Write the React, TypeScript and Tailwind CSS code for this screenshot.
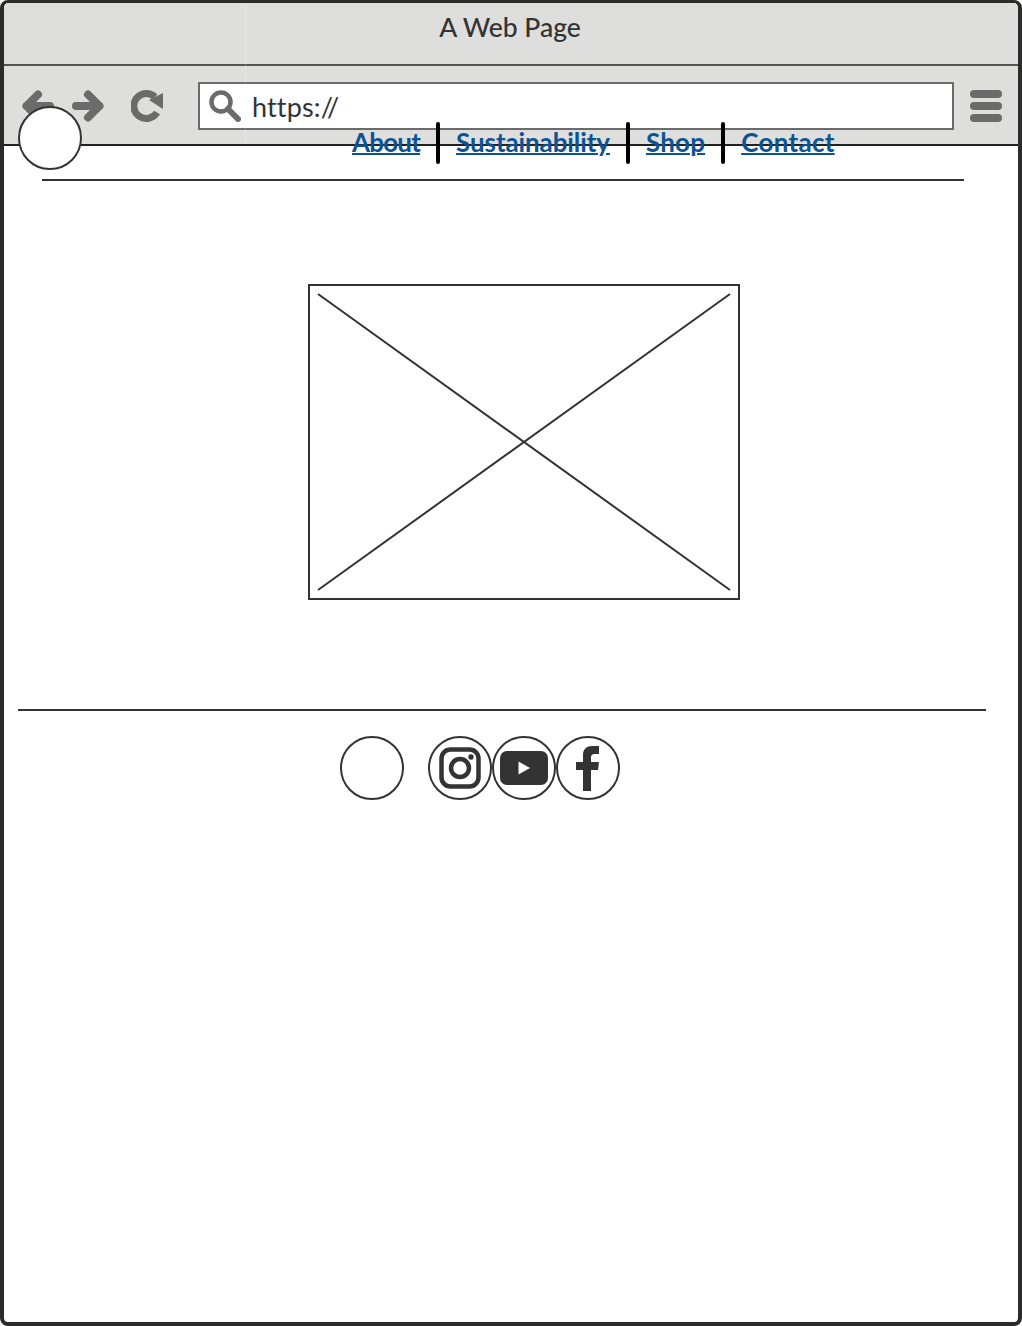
import React from 'react';

const navItems = [
  { label: 'About', tracking: 'tracking-[-0.8px]' },
  { label: 'Sustainability', tracking: 'tracking-[-0.1px]' },
  { label: 'Shop', tracking: 'tracking-[0.2px]' },
  { label: 'Contact', tracking: 'tracking-[0.3px]' },
];

const Social: React.FC<{ children?: React.ReactNode }> = ({ children }) => (
  <div className="w-16 h-16 shrink-0 rounded-full border-2 border-[#333333] bg-white flex items-center justify-center">
    {children}
  </div>
);

const App: React.FC = () => {
  return (
    <div className="relative w-[1022px] h-[1326px] bg-white border-t-[3px] border-x-4 border-b-4 border-[#2b2b2b] rounded-lg overflow-hidden font-['Lato',sans-serif]">
      {/* browser chrome */}
      <div className="h-[63px] bg-[#dededc] border-b-2 border-[#555555] flex items-center justify-center pb-[13px]">
        <span className="text-[26.5px] leading-none font-medium text-[#333333] -ml-[2px]">A Web Page</span>
      </div>
      <div className="h-[80px] bg-[#dededc] border-b-2 border-[#222222] flex items-center pl-[18px] pr-[16px] pt-[2px]">
        <svg width="32" height="32" viewBox="0 0 32 32" className="shrink-0">
          <path d="M28 16H4.500M16 4.500 4.500 16 16 27.500" fill="none" stroke="#6b6b6b" strokeWidth="8" strokeLinecap="round" strokeLinejoin="round" />
        </svg>
        <svg width="32" height="32" viewBox="0 0 32 32" className="shrink-0 ml-[18px]">
          <path d="M4 16h23.500M16 4.500 27.500 16 16 27.500" fill="none" stroke="#6b6b6b" strokeWidth="8" strokeLinecap="round" strokeLinejoin="round" />
        </svg>
        <svg width="32" height="32" viewBox="0 0 32 32" className="shrink-0 ml-[27px]">
          <path d="M26 22.500A12.500 12.500 0 1 1 24 7" fill="none" stroke="#6b6b6b" strokeWidth="7" />
          <path d="M32 3v16L18 10z" fill="#6b6b6b" />
        </svg>
        <div className="ml-[35px] w-[756px] h-[48px] shrink-0 bg-white border-2 border-[#6b6b6b] flex items-center">
          <svg width="32" height="32" viewBox="0 0 32 32" className="shrink-0 ml-[9px]">
            <circle cx="12" cy="12" r="9.500" fill="none" stroke="#6b6b6b" strokeWidth="4.500" />
            <path d="M19 19 29 29" fill="none" stroke="#6b6b6b" strokeWidth="6" strokeLinecap="round" />
          </svg>
          <span className="ml-[11px] text-[27px] leading-none tracking-[0.15px] text-[#333333]">https://</span>
        </div>
        <div className="ml-auto w-8 flex flex-col gap-1 shrink-0">
          <div className="h-2 rounded-full bg-[#6b6b6b]" />
          <div className="h-2 rounded-full bg-[#6b6b6b]" />
          <div className="h-2 rounded-full bg-[#6b6b6b]" />
        </div>
      </div>
      {/* faint seam in the chrome */}
      <div className="absolute top-0 left-[241px] w-px h-[141px] bg-white/20" />

      {/* page header, hangs over the browser toolbar */}
      <div className="relative -mt-[40px]">
        <div className="flex items-start pl-[14px]">
          <div className="w-16 h-16 shrink-0 rounded-full border-2 border-[#333333] bg-white" />
          <nav className="flex items-center ml-[270px] mt-[16px] h-[42px]">
            {navItems.map((item, i) => (
              <React.Fragment key={item.label}>
                {i > 0 && <div className="w-1 h-[42px] rounded-full bg-black ml-[16px] mr-[16px]" />}
                <a href="#" className={`-mt-[3px] text-[26px] leading-none font-bold text-[#0b5394] underline decoration-2 ${item.tracking}`}>
                  {item.label}
                </a>
              </React.Fragment>
            ))}
          </nav>
        </div>
        <div className="h-0.5 bg-[#333333] ml-[38px] mr-[54px] mt-[9px]" />
      </div>

      {/* image placeholder */}
      <div className="flex justify-center mt-[103px] pl-[26px]">
        <svg width="432" height="316" viewBox="0 0 432 316" className="shrink-0">
          <rect x="1" y="1" width="430" height="314" fill="#ffffff" stroke="#333333" strokeWidth="2" />
          <path d="M10 10 422 306M422 10 10 306" fill="none" stroke="#333333" strokeWidth="2" />
        </svg>
      </div>

      {/* footer */}
      <div className="h-0.5 bg-[#333333] ml-[14px] mr-[32px] mt-[109px]" />
      <div className="flex items-center mt-[25px] ml-[336px]">
        <Social />
        <div className="ml-6 flex">
          <Social>
            <svg width="42" height="42" viewBox="0 0 42 42">
              <rect x="2.500" y="2.500" width="37" height="37" rx="9" fill="none" stroke="#333333" strokeWidth="4.500" />
              <circle cx="21" cy="21" r="9" fill="none" stroke="#333333" strokeWidth="4.500" />
              <circle cx="32" cy="10" r="2.700" fill="#333333" />
            </svg>
          </Social>
          <Social>
            <svg width="50" height="36" viewBox="0 0 50 36">
              <rect x="1" y="1" width="48" height="34" rx="7" fill="#333333" />
              <path d="M19.500 11.500v13L31 18z" fill="#ffffff" />
            </svg>
          </Social>
          <Social>
            <svg width="26" height="46" viewBox="0 0 26 46">
              <path d="M8 46V25H1v-8h7v-7C8 4 12 1 17 1h7v8h-4c-3 0-4 1-4 3.500V17h8l-1 8h-7v21z" fill="#333333" />
            </svg>
          </Social>
        </div>
      </div>
    </div>
  );
};

export default App;
